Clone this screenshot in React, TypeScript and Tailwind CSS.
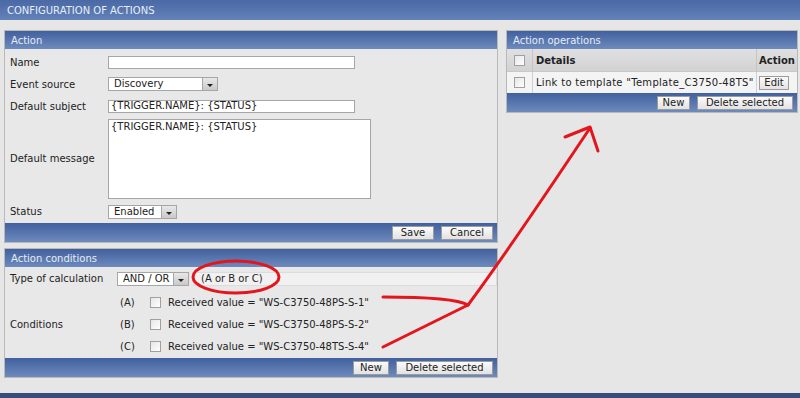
import type { ReactNode } from "react";

const bar = "bg-gradient-to-b from-[#41609e] to-[#6e8bbd]";

function Button({ children, w }: { children: ReactNode; w: string }) {
	return (
		<button
			className={`${w} flex h-[14px] items-center justify-center border border-[#9c9c9c] bg-gradient-to-b from-[#fbfbfb] to-[#e2e2e2] text-[10px] leading-none text-[#222]`}
		>
			{children}
		</button>
	);
}

function Select({ value, w }: { value: string; w: string }) {
	return (
		<div className={`${w} flex h-[14px] items-stretch border border-[#a6a6a6] bg-white`}>
			<span className="flex flex-1 items-center pl-[5px] leading-none">{value}</span>
			<span className="flex w-[15px] items-center justify-center border-l border-[#a6a6a6] bg-gradient-to-b from-[#e8e8e8] to-[#c9c9c9]">
				<span className="mt-[3px] h-0 w-0 border-x-[3px] border-t-[3px] border-x-transparent border-t-[#222]" />
			</span>
		</div>
	);
}

function Checkbox() {
	return <span className="block h-[11px] w-[11px] border border-[#a0a0a0] bg-gradient-to-br from-[#e6e6e6] to-white" />;
}

function Panel({ title, children, footer }: { title: string; children: ReactNode; footer: ReactNode }) {
	return (
		<section className="flex flex-col border border-[#b9b9b9] bg-[#e8e8e8]">
			<h2 className={`${bar} flex h-[18px] items-center pl-[6px] text-[10px] font-normal text-[#e6ecf6]`}>{title}</h2>
			{children}
			<div className={`${bar} flex h-[19px] items-center justify-end gap-[7px] pr-[4px]`}>{footer}</div>
		</section>
	);
}

function Row({ label, children, h = "h-[21px]" }: { label: string; children: ReactNode; h?: string }) {
	return (
		<div className={`${h} flex items-center pl-[5px]`}>
			<span className="w-[98px] shrink-0">{label}</span>
			{children}
		</div>
	);
}

const conditions = [
	{ id: "A", text: 'Received value = "WS-C3750-48PS-S-1"' },
	{ id: "B", text: 'Received value = "WS-C3750-48PS-S-2"' },
	{ id: "C", text: 'Received value = "WS-C3750-48TS-S-4"' },
];

export default function App() {
	return (
		<div className="relative flex h-[398px] w-[800px] flex-col overflow-hidden bg-[#e6e6e6] font-['DejaVu_Sans',sans-serif] text-[10px] text-[#222]">
			<header className="flex h-[20px] items-center bg-gradient-to-b from-[#4a69a5] to-[#6382b9] pl-[7px] text-[#e8eef8]">
				CONFIGURATION OF ACTIONS
			</header>

			<div className="flex gap-[8px] pl-[4px] pt-[10px]">
				<div className="flex w-[494px] flex-col gap-[5px]">
					<Panel
						title="Action"
						footer={
							<>
								<Button w="w-[42px]">Save</Button>
								<Button w="w-[52px]">Cancel</Button>
							</>
						}
					>
						<div className="pt-[3px]">
							<Row label="Name">
								<div className="h-[13px] w-[247px] border border-[#a6a6a6] bg-white" />
							</Row>
							<Row label="Event source" h="h-[22px]">
								<Select value="Discovery" w="w-[110px]" />
							</Row>
							<Row label="Default subject" h="h-[22px]">
								<div className="flex h-[13px] w-[247px] items-center border border-[#a6a6a6] bg-white pl-[2px] leading-none">
									{"{TRIGGER.NAME}: {STATUS}"}
								</div>
							</Row>
							<Row label="Default message" h="h-[83px]">
								<div className="h-[80px] w-[263px] border border-[#a6a6a6] bg-white pl-[2px] pt-[2px] leading-none">
									{"{TRIGGER.NAME}: {STATUS}"}
								</div>
							</Row>
							<Row label="Status" h="h-[23px]">
								<Select value="Enabled" w="w-[69px]" />
							</Row>
						</div>
					</Panel>

					<Panel
						title="Action conditions"
						footer={
							<>
								<Button w="w-[36px]">New</Button>
								<Button w="w-[97px]">Delete selected</Button>
							</>
						}
					>
						<div className="flex h-[23px] items-center pl-[5px]">
							<span className="w-[107px] shrink-0">Type of calculation</span>
							<Select value="AND / OR" w="w-[72px]" />
							<div className="ml-[4px] flex h-[14px] flex-1 items-center border border-[#dcdcdc] bg-[#f1f1f1] pl-[7px] leading-none">
								(A or B or C)
							</div>
						</div>
						<div className="flex h-[68px] items-center pl-[5px]">
							<span className="w-[110px] shrink-0">Conditions</span>
							<div className="flex flex-col">
								{conditions.map(({ id, text }) => (
									<div key={id} className="flex h-[22px] items-center">
										<span className="w-[30px]">({id})</span>
										<Checkbox />
										<span className="ml-[7px]">{text}</span>
									</div>
								))}
							</div>
						</div>
					</Panel>
				</div>

				<div className="w-[292px]">
					<Panel
						title="Action operations"
						footer={
							<>
								<Button w="w-[33px]">New</Button>
								<Button w="w-[96px]">Delete selected</Button>
							</>
						}
					>
						<div className="flex h-[23px] items-stretch border-b border-[#c8c8c8] bg-gradient-to-b from-[#e0e0e0] to-[#d2d2d2] font-bold">
							<div className="flex w-[26px] items-center justify-center border-r border-[#c4c4c4]">
								<Checkbox />
							</div>
							<div className="flex flex-1 items-center border-r border-[#c4c4c4] pl-[3px]">Details</div>
							<div className="flex w-[40px] items-center pl-[2px]">Action</div>
						</div>
						<div className="flex h-[21px] items-stretch bg-[#f4f4f4]">
							<div className="flex w-[26px] items-center justify-center border-r border-[#d0d0d0]">
								<Checkbox />
							</div>
							<div className="flex flex-1 items-center border-r border-[#d0d0d0] pl-[3px] tracking-[0.3px]">
								Link to template "Template_C3750-48TS"
							</div>
							<div className="flex w-[40px] items-center pl-[2px]">
								<Button w="w-[30px]">Edit</Button>
							</div>
						</div>
					</Panel>
				</div>
			</div>

			<div className="mt-auto h-[5px] bg-[#384d7c]" />

			<svg
				className="pointer-events-none absolute inset-0"
				width="800"
				height="398"
				viewBox="0 0 800 398"
				fill="none"
				stroke="#e3161d"
				strokeWidth="3"
				strokeLinecap="round"
				strokeLinejoin="round"
			>
				<ellipse cx="236" cy="277" rx="43" ry="16" />
				<path d="M383 297 C 420 297, 456 298, 468 305" />
				<path d="M383 347 L 468 305" />
				<path d="M468 305 C 500 262, 550 188, 590 128" />
				<path d="M565 137 L590 127 L598 151" />
			</svg>
		</div>
	);
}
